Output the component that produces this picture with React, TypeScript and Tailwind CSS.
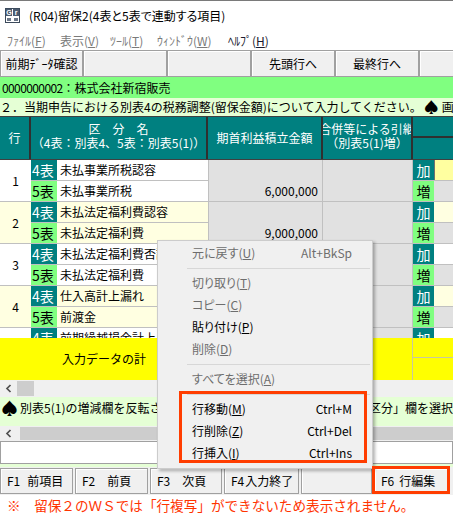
import React from "react";

type Row = {
  no: string;
  a: string;
  b: string;
  amt?: string;
  cream?: boolean;
  sel?: boolean;
};

const rows: Row[] = [
  { no: "1", a: "未払事業所税認容", b: "未払事業所税", amt: "6,000,000", sel: true },
  { no: "2", a: "未払法定福利費認容", b: "未払法定福利費", amt: "9,000,000", cream: true },
  { no: "3", a: "未払法定福利費否認", b: "未払法定福利費" },
  { no: "4", a: "仕入高計上漏れ", b: "前渡金", cream: true },
  { no: "5", a: "前期繰越損金計上", b: "" },
];

function AppIcon() {
  return (
    <svg width="15" height="15" viewBox="0 0 15 15" className="shrink-0">
      <rect x="0.5" y="0.5" width="14" height="14" fill="#ffffff" stroke="#3c4a5c" />
      <rect x="1" y="1" width="6" height="7" fill="#4b5b70" />
      <rect x="8" y="1" width="6" height="7" fill="#4b5b70" />
      <text x="4" y="7" fontSize="7" fill="#ffffff" textAnchor="middle" fontFamily="Liberation Sans" fontWeight="bold">G</text>
      <text x="11" y="7" fontSize="7" fill="#ffffff" textAnchor="middle" fontFamily="Liberation Sans" fontWeight="bold">r</text>
      <rect x="2" y="10" width="4" height="3" fill="#6b7788" />
      <rect x="9" y="10" width="4" height="3" fill="#6b7788" />
    </svg>
  );
}

function Chevron() {
  return (
    <svg width="7" height="9" viewBox="0 0 7 9" className="shrink-0">
      <path d="M5.5 1 L2 4.5 L5.5 8" fill="none" stroke="#505050" strokeWidth="1.7" />
    </svg>
  );
}

function ToolButton({ w, children }: { w: string; children?: React.ReactNode }) {
  return (
    <div className={`${w} flex shrink-0 items-center justify-center border border-[#a0a0a0] bg-[#f0f0f0] text-[12px] whitespace-nowrap shadow-[inset_1px_1px_0_#ffffff]`}>
      {children}
    </div>
  );
}

function FKey({ w, k, label, gap }: { w: string; k?: string; label?: string; gap?: string }) {
  return (
    <div className={`${w} flex shrink-0 items-center border border-[#a0a0a0] bg-[#f0f0f0] pl-[6px] text-[12px] whitespace-nowrap shadow-[inset_1px_1px_0_#ffffff]`}>
      {k && <span>{k}</span>}
      {label && <span className={gap}>{label}</span>}
    </div>
  );
}

function RowGroup({ row }: { row: Row }) {
  const bg = row.cream ? "bg-[#ffffe1]" : "bg-white";
  return (
    <div className="flex h-[42px] shrink-0 border-b border-[#c0c0c0] text-[12px]">
      <div className={`flex w-[31px] shrink-0 items-center justify-center ${bg}`}>{row.no}</div>
      <div className="flex w-[177px] shrink-0 flex-col">
        <div className="flex h-[21px] border-b border-[#c0c0c0]">
          <div className="w-[26px] shrink-0 bg-[#008080] pl-[1px] text-[14px] leading-[20px] text-white">4表</div>
          <div className={`flex-1 overflow-hidden whitespace-nowrap pl-[3px] leading-[20px] ${bg}`}>{row.a}</div>
        </div>
        <div className="flex h-[20px]">
          <div className="w-[26px] shrink-0 bg-[#80ff80] pl-[1px] text-[14px] leading-[20px]">5表</div>
          <div className={`flex-1 overflow-hidden whitespace-nowrap pl-[3px] leading-[20px] ${bg}`}>{row.b}</div>
        </div>
      </div>
      <div className="flex w-[115px] shrink-0 flex-col justify-end border-x border-[#c0c0c0] bg-[#e1e1e1] pr-[4px] text-right leading-[20px]">
        {row.amt}
      </div>
      <div className="w-[90px] shrink-0 border-r border-[#c0c0c0] bg-[#e1e1e1]" />
      <div className="flex w-[61px] shrink-0 flex-col">
        <div className="flex h-[21px] border-b border-[#c0c0c0]">
          <div className="w-[21px] shrink-0 bg-[#008080] text-center text-[14px] leading-[20px] text-white">加</div>
          <div className={`flex-1 ${row.sel ? "border-l border-[#707070] bg-[#ffffa0]" : bg}`} />
        </div>
        <div className="flex h-[20px]">
          <div className="w-[21px] shrink-0 bg-[#80ff80] text-center text-[14px] leading-[20px]">増</div>
          <div className="flex-1 bg-[#e1e1e1]" />
        </div>
      </div>
    </div>
  );
}

function MenuItem({
  label,
  mn,
  shortcut,
  disabled,
}: {
  label: string;
  mn: string;
  shortcut?: string;
  disabled?: boolean;
}) {
  return (
    <div className={`flex h-[22px] items-center justify-between pl-[34px] pr-[20px] ${disabled ? "text-[#6d6d6d]" : "text-black"}`}>
      <span>
        {label}(<span className="underline">{mn}</span>)
      </span>
      {shortcut && <span>{shortcut}</span>}
    </div>
  );
}

function MenuSep() {
  return (
    <div className="flex h-[8px] items-center pl-[29px] pr-[2px]">
      <div className="h-px flex-1 bg-[#d7d7d7]" />
    </div>
  );
}

export default function App() {
  return (
    <div className="relative h-[521px] w-[453px] overflow-hidden bg-white font-['Noto_Sans_CJK_JP',sans-serif] text-black">
      {/* title bar */}
      <div className="flex h-[30px] items-center border-t border-[#7a7a7a] bg-white pl-[5px]">
        <AppIcon />
        <span className="ml-[9px] text-[12px] [font-feature-settings:'palt']">(R04)留保2(4表と5表で連動する項目)</span>
      </div>

      {/* menu bar */}
      <div className="flex h-[20px] pl-[7px] pt-[3px] text-[12px] leading-[16px] text-[#7a7a7a]">
        <span className="w-[53px]">ﾌｧｲﾙ(<span className="underline">F</span>)</span>
        <span className="w-[50px]">表示(<span className="underline">V</span>)</span>
        <span className="w-[47px]">ﾂｰﾙ(<span className="underline">T</span>)</span>
        <span className="w-[71px]">ｳｨﾝﾄﾞｳ(<span className="underline">W</span>)</span>
        <span className="text-[#1a1a2e]">ﾍﾙﾌﾟ(<span className="underline">H</span>)</span>
      </div>

      {/* toolbar */}
      <div className="flex h-[27px] bg-[#f0f0f0]">
        <ToolButton w="w-[83px]">前期ﾃﾞｰﾀ確認</ToolButton>
        <ToolButton w="w-[84px]" />
        <ToolButton w="w-[84px]" />
        <ToolButton w="w-[84px]">先頭行へ</ToolButton>
        <ToolButton w="w-[84px]">最終行へ</ToolButton>
        <ToolButton w="w-[40px]" />
      </div>

      {/* company */}
      <div className="flex h-[21px] items-center bg-[#80ff80] pl-[2px] text-[12px]">
        <span className="tracking-[-0.6px]">0000000002</span>
        <span>：株式会社新宿販売</span>
      </div>

      {/* instruction */}
      <div className="flex h-[18px] items-center overflow-hidden whitespace-nowrap bg-[#e5ffd5] text-[12px]">
        <span>２．当期申告における別表4の税務調整(留保金額)について入力してください。</span>
        <span className="ml-[2px] text-[15px] leading-[16px]">♠</span>
        <span className="ml-[3px]">画面</span>
      </div>

      {/* grid header */}
      <div className="flex h-[44px] border-y border-[#404040] bg-[#008080] text-[12px] text-white">
        <div className="flex w-[31px] shrink-0 items-center justify-center border-r-2 border-[#303030]">行</div>
        <div className="flex w-[177px] shrink-0 flex-col items-center justify-center whitespace-nowrap border-r-2 border-[#303030] pb-[4px] leading-[14px]">
          <span>区　分　名</span>
          <span>（4表：別表4、5表：別表5(1)）</span>
        </div>
        <div className="flex w-[115px] shrink-0 items-center justify-center whitespace-nowrap border-r-2 border-[#303030]">期首利益積立金額</div>
        <div className="flex w-[90px] shrink-0 flex-col items-center justify-center overflow-hidden whitespace-nowrap border-r-2 border-[#303030] pb-[4px] leading-[14px]">
          <span>合併等による引継</span>
          <span>（別表5(1)増）</span>
        </div>
        <div className="flex w-[45px] shrink-0 flex-col">
          <div className="h-[21px] border-b-2 border-[#303030]" />
          <div className="flex-1" />
        </div>
      </div>

      {/* grid body */}
      <div className="h-[178px] overflow-hidden">
        {rows.map((r) => (
          <RowGroup key={r.no} row={r} />
        ))}
      </div>

      {/* total row */}
      <div className="flex h-[42px] bg-[#ffff00] text-[12px]">
        <div className="flex w-[208px] shrink-0 items-center justify-center">入力データの計</div>
        <div className="w-[115px] shrink-0 border-r border-[#c8c8a0]" />
        <div className="w-[90px] shrink-0 border-r border-[#c8c8a0]" />
        <div className="flex flex-1 flex-col">
          <div className="h-[20px] border-b border-[#c8c8a0]" />
        </div>
      </div>

      {/* scrollbar 1 */}
      <div className="flex h-[17px] items-center bg-[#f0f0f0]">
        <div className="flex w-[17px] justify-center">
          <Chevron />
        </div>
        <div className="h-[15px] w-[17px] bg-[#cdcdcd]" />
      </div>

      {/* hint row */}
      <div className="flex h-[29px] items-start overflow-hidden whitespace-nowrap bg-[#e5ffd5] pt-[2px] text-[12px] leading-[18px]">
        <span className="w-[20px] shrink-0 pl-[1px] text-[17px] leading-[18px]">♠</span>
        <span className="min-w-0 flex-1 overflow-hidden">別表5(1)の増減欄を反転させる場合</span>
        <span className="shrink-0">「区分」欄を選択</span>
      </div>

      {/* scrollbar 2 */}
      <div className="flex h-[15px] items-center bg-[#f0f0f0]">
        <div className="flex w-[17px] justify-center">
          <Chevron />
        </div>
        <div className="ml-[3px] h-[13px] flex-1 bg-[#cdcdcd]" />
      </div>

      {/* input box */}
      <div className="h-[23px] border border-[#a0a0a0] bg-white" />
      <div className="h-[3px] bg-[#e5ffd5]" />

      {/* function keys */}
      <div className="flex h-[28px] gap-[2px] bg-[#f0f0f0] py-[1px]">
        <FKey w="w-[73px]" k="F1" label="前項目" gap="ml-[7px]" />
        <FKey w="w-[73px]" k="F2" label="前頁" gap="ml-[12px]" />
        <FKey w="w-[72px]" k="F3" label="次頁" gap="ml-[12px]" />
        <FKey w="w-[75px]" k="F4" label="入力終了" gap="ml-[1px]" />
        <FKey w="w-[71px]" />
        <FKey w="w-[75px]" k="F6" label="行編集" gap="ml-[5px]" />
      </div>

      {/* note */}
      <div className="h-[26px] whitespace-nowrap pl-[7px] pt-[1px] text-[13.6px] leading-[18px] text-[#ff3300]">
        ※　留保２のＷＳでは「行複写」ができないため表示されません。
      </div>

      {/* context menu */}
      <div className="absolute left-[157px] top-[240px] w-[216px] border border-[#cccccc] bg-[#f0f0f0] pb-[4px] pt-[1px] text-[12px] [font-feature-settings:'palt'] shadow-[2px_2px_3px_rgba(0,0,0,0.3)]">
        <MenuItem label="元に戻す" mn="U" shortcut="Alt+BkSp" disabled />
        <MenuSep />
        <MenuItem label="切り取り" mn="T" disabled />
        <MenuItem label="コピー" mn="C" disabled />
        <MenuItem label="貼り付け" mn="P" />
        <MenuItem label="削除" mn="D" disabled />
        <MenuSep />
        <MenuItem label="すべてを選択" mn="A" disabled />
        <MenuSep />
        <MenuItem label="行移動" mn="M" shortcut="Ctrl+M" />
        <MenuItem label="行削除" mn="Z" shortcut="Ctrl+Del" />
        <MenuItem label="行挿入" mn="I" shortcut="Ctrl+Ins" />
      </div>

      {/* annotation boxes */}
      <div className="pointer-events-none absolute left-[179px] top-[391px] h-[72px] w-[188px] border-[3px] border-[#ff3d00]" />
      <div className="pointer-events-none absolute left-[372px] top-[466px] h-[28px] w-[78px] border-[3px] border-[#ff3d00]" />
    </div>
  );
}
